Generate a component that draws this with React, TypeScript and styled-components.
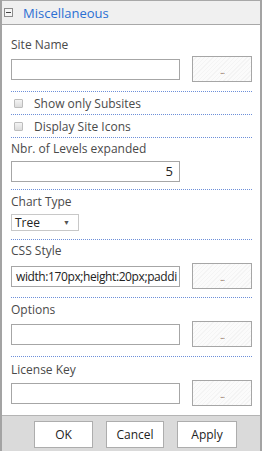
import React from "react";
import styled, { createGlobalStyle } from "styled-components";

const GlobalStyle = createGlobalStyle`
  html, body {
    margin: 0;
    padding: 0;
    background: #fff;
  }
  body {
    font-family: "Open Sans", "Noto Sans", "Liberation Sans", sans-serif;
  }
`;

const Panel = styled.div`
  width: 262px;
  height: 451px;
  box-sizing: border-box;
  border-left: 2px solid #a3a3a3;
  border-right: 2px solid #a3a3a3;
  display: flex;
  flex-direction: column;
  background: #fff;
  overflow: hidden;
`;

const Header = styled.div`
  height: 25px;
  box-sizing: border-box;
  border-top: 1px solid #a8a8a8;
  border-bottom: 1px solid #a8a8a8;
  background: #f0f0f0;
  display: flex;
  align-items: center;
  padding-left: 2px;
  gap: 10px;
`;

const Toggle = styled.div`
  width: 9px;
  height: 9px;
  box-sizing: border-box;
  border: 1px solid #8c8c8c;
  background: #f6f6f6;
  display: flex;
  align-items: center;
  justify-content: center;
  &::after {
    content: "";
    width: 5px;
    height: 1px;
    background: #444;
  }
`;

const Title = styled.span`
  font-size: 13px;
  color: #2b6fd3;
  line-height: 16px;
`;

const Body = styled.div`
  flex: 1;
  padding: 0 8px 0 9px;
  display: flex;
  flex-direction: column;
`;

const Section = styled.div<{ $top: number; $bottom: number; $last?: boolean }>`
  padding-top: ${(p) => p.$top}px;
  padding-bottom: ${(p) => p.$bottom}px;
  border-bottom: ${(p) => (p.$last ? "none" : "1px dotted #6d8fd9")};
  display: flex;
  flex-direction: column;
`;

const Label = styled.div`
  font-size: 12px;
  line-height: 16px;
  color: #4a4a4a;
  white-space: nowrap;
`;

const FieldRow = styled.div<{ $gap: number }>`
  margin-top: ${(p) => p.$gap}px;
  display: flex;
  align-items: center;
  gap: 12px;
`;

const TextBox = styled.div<{ $align?: string; $tight?: boolean }>`
  width: 169px;
  height: 21px;
  box-sizing: border-box;
  border: 1px solid #a6a6a6;
  background: #fff;
  font-size: ${(p) => (p.$tight ? 12 : 13)}px;
  letter-spacing: ${(p) => (p.$tight ? "-0.4px" : "0")};
  line-height: 19px;
  color: #222;
  padding: 0 ${(p) => (p.$tight ? 2 : 6)}px 0 4px;
  text-align: ${(p) => p.$align || "left"};
  white-space: nowrap;
  overflow: hidden;
`;

const PickButton = styled.div`
  width: 60px;
  height: 26px;
  box-sizing: border-box;
  border: 1px solid #a6a6a6;
  background: repeating-linear-gradient(
    135deg,
    #fbfbfb 0px,
    #fbfbfb 2px,
    #f4f4f4 2px,
    #f4f4f4 3px
  );
  display: flex;
  align-items: center;
  justify-content: center;
  font-size: 9px;
  letter-spacing: -1px;
  color: #8a6a55;
  padding-top: 2px;
`;

const CheckRow = styled.label`
  height: 21px;
  display: flex;
  align-items: center;
  padding-left: 3px;
  gap: 11px;
  font-size: 12px;
  color: #4a4a4a;
  border-bottom: 1px dotted #6d8fd9;
  padding-top: 1px;
`;

const Box = styled.span`
  width: 9px;
  height: 9px;
  box-sizing: border-box;
  border: 1px solid #bdbdbd;
  border-radius: 1px;
  background: linear-gradient(#f4f4f4, #dcdcdc);
`;

const Select = styled.div`
  margin-top: 4px;
  width: 68px;
  height: 17px;
  box-sizing: border-box;
  border: 1px solid #c8c8c8;
  display: flex;
  align-items: center;
  justify-content: space-between;
  padding: 0 8px 0 3px;
  font-size: 12px;
  color: #222;
`;

const Arrow = styled.span`
  font-size: 7px;
  color: #555;
`;

const Footer = styled.div`
  height: 36px;
  box-sizing: border-box;
  border-top: 1px solid #b4b4b4;
  background: #dadada;
  display: flex;
  align-items: flex-start;
  padding: 5px 0 0 32px;
  gap: 13px;
`;

const ActionButton = styled.div<{ $w: number }>`
  width: ${(p) => p.$w}px;
  height: 27px;
  box-sizing: border-box;
  border: 1px solid #adadad;
  background: #fff;
  display: flex;
  align-items: center;
  justify-content: center;
  font-size: 12px;
  color: #222;
`;

const fields = [
  { label: "Options", top: 4, gap: 3, bottom: 9 },
  { label: "License Key", top: 5, gap: 2, bottom: 0, last: true },
];

export default function App() {
  return (
    <>
      <GlobalStyle />
      <Panel>
        <Header>
          <Toggle />
          <Title>Miscellaneous</Title>
        </Header>
        <Body>
          <Section $top={12} $bottom={9}>
            <Label>Site Name</Label>
            <FieldRow $gap={3}>
              <TextBox />
              <PickButton>...</PickButton>
            </FieldRow>
          </Section>
          <CheckRow>
            <Box />
            Show only Subsites
          </CheckRow>
          <CheckRow>
            <Box />
            Display Site Icons
          </CheckRow>
          <Section $top={3} $bottom={7}>
            <Label>Nbr. of Levels expanded</Label>
            <FieldRow $gap={4}>
              <TextBox $align="right">5</TextBox>
            </FieldRow>
          </Section>
          <Section $top={4} $bottom={8}>
            <Label>Chart Type</Label>
            <Select>
              Tree
              <Arrow>▼</Arrow>
            </Select>
          </Section>
          <Section $top={3} $bottom={8}>
            <Label>CSS Style</Label>
            <FieldRow $gap={4}>
              <TextBox $tight>width:170px;height:20px;paddi</TextBox>
              <PickButton>...</PickButton>
            </FieldRow>
          </Section>
          {fields.map((f) => (
            <Section key={f.label} $top={f.top} $bottom={f.bottom} $last={f.last}>
              <Label>{f.label}</Label>
              <FieldRow $gap={f.gap}>
                <TextBox />
                <PickButton>...</PickButton>
              </FieldRow>
            </Section>
          ))}
        </Body>
        <Footer>
          <ActionButton $w={59}>OK</ActionButton>
          <ActionButton $w={58}>Cancel</ActionButton>
          <ActionButton $w={60}>Apply</ActionButton>
        </Footer>
      </Panel>
    </>
  );
}
